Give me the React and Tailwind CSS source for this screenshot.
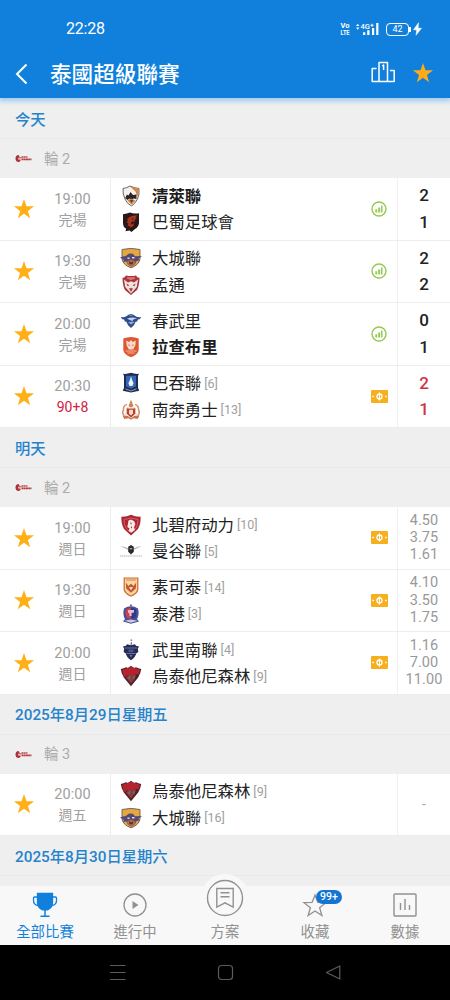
// src/pages/LeagueFixtures.jsx
import { useState } from 'react';

const sections = [
  {
    title: '今天',
    round: '輪 2',
    matches: [
      { time: '19:00', status: '完場', home: '清萊聯', away: '巴蜀足球會', winner: 'home', icon: 'stats', score: ['2', '1'] },
      { time: '19:30', status: '完場', home: '大城聯', away: '孟通', icon: 'stats', score: ['2', '2'] },
      { time: '20:00', status: '完場', home: '春武里', away: '拉查布里', winner: 'away', icon: 'stats', score: ['0', '1'] },
      { time: '20:30', status: '90+8', live: true, home: '巴吞聯', homeRank: 6, away: '南奔勇士', awayRank: 13, icon: 'odds', score: ['2', '1'] },
    ],
  },
  {
    title: '明天',
    round: '輪 2',
    matches: [
      { time: '19:00', status: '週日', home: '北碧府动力', homeRank: 10, away: '曼谷聯', awayRank: 5, icon: 'odds', odds: ['4.50', '3.75', '1.61'] },
      { time: '19:30', status: '週日', home: '素可泰', homeRank: 14, away: '泰港', awayRank: 3, icon: 'odds', odds: ['4.10', '3.50', '1.75'] },
      { time: '20:00', status: '週日', home: '武里南聯', homeRank: 4, away: '烏泰他尼森林', awayRank: 9, icon: 'odds', odds: ['1.16', '7.00', '11.00'] },
    ],
  },
  {
    title: '2025年8月29日星期五',
    round: '輪 3',
    matches: [
      { time: '20:00', status: '週五', home: '烏泰他尼森林', homeRank: 9, away: '大城聯', awayRank: 16 },
    ],
  },
  { title: '2025年8月30日星期六', matches: [] },
];

const STAR = 'M12 1l2.700 8 8.300.1-6.700 5 2.400 8L12 17.300 5.300 22.100l2.400-8-6.700-5L9.300 9z';
const SHIELD = 'M2.5 3Q6 3 11 1.5 16 3 19.5 3V11Q19 17 11 20.5 3 17 2.5 11Z';

// escudos dos times
const crests = {
  清萊聯: (
    <>
      <path d="M3 3.5Q7 3 10 1 14 3 19 3.5 19.5 10 17.5 14 15 19 11.5 21 7 19 5 14 2.5 9 3 3.5z" fill="#f4f1ec" stroke="#4a4038" strokeWidth=".8" />
      <path d="M10 1.4q4 2 8.6 2.300.2 5-1.200 8L15.500 6.500z" fill="#d9833c" />
      <path d="M5.200 13l1.800-3.500 1.500 1L10.500 7l2.500 3 3.500-.5v4.500l-3-.5-2 1.500-2-1.500-2 1.500z" fill="#2a2627" />
      <path d="M7.500 15.5L11 13.600l4.500 1.900-3.800 4.300z" fill="#c98147" />
      <path d="M10 15.200h3l-1.400 2.400z" fill="#3b2c28" />
    </>
  ),
  巴蜀足球會: (
    <>
      <path d="M3 3.2Q7 3 10 1.6 14 3 19 2.200V12q-.5 4-4 6l-3.500 3-2-1.500-4 .8.6-2.500Q3 16 3 12z" fill="#2b1717" />
      <path d="M9 6.200q4-2.400 8.400-1.600l-2.200 2.200 1.600.2-2.400 2 .9 1.500-3.400.3q-1.500 1.200-.3 2.600l2.600-1.500-.8 3-3 1.800-1-2-2 .8 1-3-1.800-1.200 1.800-2.200-1.600-.5z" fill="#a9351f" />
      <path d="M11.500 7.500l2.500-.4-1.600 1.700z" fill="#2b1717" />
    </>
  ),
  大城聯: (
    <>
      <path d="M2 2.500Q11 .3 20 2.500V12q-1 6-9 8.800Q3 18 2 12z" fill="#e3a93b" stroke="#70536a" strokeWidth=".9" />
      <path d="M0 10.500l4.500-1.500.5.500L9 6.600l4 .2 2 2.500 7-.3-3.500 2.500 1 2-3 .5q-1 4-5 5.500-4-1.500-5-5l-3.500.5 1-2z" fill="#54497a" />
      <path d="M7 14.500l4-2 4.500 2-1 3.200-3.500 2-3.200-2z" fill="#b96b3b" />
      <path d="M7.500 10.500h2v1.500h-2zM12 10h2.500v1.500H12z" fill="#e9dccd" />
      <path d="M9 14.200l2 1.400 2.200-1.400-.7 3h-3z" fill="#4b3342" />
    </>
  ),
  孟通: (
    <>
      <path d="M2.500 4Q5 3.500 6 1.500q5 1 10 0 1 2 3.500 2.500-.2 8-2.500 12l-6 5-6-5Q2.700 12 2.500 4z" fill="#a9343b" />
      <path d="M4 5.500L8 8.500l3-1.200 3 1.200 4-3-1.200 7.500L11 19.500 5.200 13z" fill="#ece3e1" />
      <path d="M7 3.200h8v1.600L11 6 7 4.800z" fill="#d9797b" />
      <path d="M6.300 9.500l3 1.800-1.600 1zM15.700 9.500l-3 1.800 1.600 1zM9 14.200h4L11 18z" fill="#a9343b" />
    </>
  ),
  春武里: (
    <>
      <path d="M.8 7Q4 7.500 6 6.500 8.500 4 11 4t5 2.500q2 1 5.200.5l-1.500 2.300-1.900.3-.6 1.800-1.600.4Q14.500 16 11 18 7.500 16 6.400 11.800l-1.600-.4-.6-1.800-1.900-.3z" fill="#2f4b8c" />
      <path d="M7 8.800Q11 6.600 17 8.200q-3.700.5-4.800 2.800z" fill="#c3d2ea" />
      <path d="M8 12.200l4.800-.8 1.800.8-3.600 2.300z" fill="#8ea9d3" />
      <path d="M8.500 6Q11 4.600 13.500 6z" fill="#8ea9d3" />
    </>
  ),
  拉查布里: (
    <>
      <path d="M3.300 2.600Q11-.4 18.700 2.600V14q-.4 4.600-7.700 7.300Q3.700 18.600 3.300 14z" fill="#dd5831" />
      <path d="M6.200 4.600l3 1.400L11 4l1.800 2 3-1.400-.4 4.600-2.200 4.200H8.800L6.600 9.200z" fill="#f8d9cc" />
      <path d="M8.300 8.200l2 1-1.400.8zM13.700 8.200l-2 1 1.400.8z" fill="#dd5831" />
      <path d="M5.500 15h11M7.500 17h7" stroke="#f3b39c" strokeWidth="1" />
    </>
  ),
  巴吞聯: (
    <>
      <path d="M3 1.800Q7 2.300 11 .8q4 1.500 8 1l-1 2v12l1.200 3L11 20.600 2.800 18.800l1.200-3v-12z" fill="#1f2c50" />
      <path d="M6 3.800h10v10.800l-5 2.200-5-2.200z" fill="#3568b3" />
      <path d="M11 4.200l1 3.600 1.600 3.400L12.400 14H9.600l-1.200-2.800L10 7.800z" fill="#f1f5fb" />
      <path d="M5.500 16.800L11 19l5.500-2.200" stroke="#aebfdb" fill="none" strokeWidth=".8" />
    </>
  ),
  南奔勇士: (
    <>
      <path d="M11 .8l1.600 3.400H9.400z" fill="#c98d5e" />
      <path d="M7 5.400Q3 6.500 3.500 11q-2 3 .8 5.500M15 5.400q4 1.100 3.500 5.600 2 3-.8 5.500" fill="none" stroke="#cf9270" strokeWidth="1.500" />
      <path d="M8.400 7.400L6 9.500v4L5 15.500l3-.5zM13.600 7.400L16 9.500v4l1 2-3-.5z" fill="#e9bda0" />
      <path d="M7 9.500h8v5.400l-4 3.800-4-3.800z" fill="#b8412f" />
      <path d="M9 10.800h4v3.600l-2 2-2-2z" fill="#f2d9c8" />
      <path d="M2.500 16.500l5 .2 3.500 2.600 3.500-2.600 5-.2-1.800 3.500-4.200-.8L11 20.700 8.500 19.200l-4.200.8z" fill="#c9764f" />
      <circle cx="11" cy="6.200" r="2.200" fill="#cf8257" />
    </>
  ),
  北碧府动力: (
    <>
      <path d="M1.400 2.600Q6 3 11 .7q5 2.300 9.600 1.900Q21 10 18 15l-7 6.500L4 15Q1 10 1.400 2.600z" fill="#ad2530" />
      <path d="M4 5.500Q11 2.500 18 5.500q0 5.500-2 8.500l-5 5-5-5Q4 11 4 5.500z" fill="none" stroke="#d9787d" strokeWidth=".7" />
      <path d="M8.500 6.500l2.500-1 3 1.500 1.400 3-1.400 3.500 1 2.500-3.500 2.500-3-1.500 1-2.500-2.200-1.500.6-3z" fill="#f5e9e6" />
      <path d="M10 8.500l2 .8-1 1.200zM10.500 13l1.500-.6v2z" fill="#ad2530" />
    </>
  ),
  曼谷聯: (
    <>
      <path d="M0 6.300Q5 6.300 8 8.300V10Q5 8 0 6.300zM22 6.300Q17 6.300 14 8.300V10q3-2 8-3.700z" fill="#b7b7b7" />
      <path d="M8.200 6.700L11 5l2.800 1.700v5.100L11 14.400l-2.800-2.600z" fill="#292929" />
      <path d="M9.800 8.100h2.400v1.200H9.800z" fill="#c5b78e" />
      <path d="M0 16h22" stroke="#cfcfcf" strokeWidth="1.300" strokeDasharray="1.400 .5" />
    </>
  ),
  素可泰: (
    <>
      <path d="M3.600 1.400h14.800v12q-.6 4.400-7.400 7.400-6.800-3-7.400-7.400z" fill="#d4652b" />
      <path d="M4.800 2.600h12.400v10.600q-.6 3.700-6.200 6.200-5.600-2.500-6.200-6.200z" fill="#f6d8a0" />
      <path d="M5.800 6.500l2.600 3.600L11 7.800l2.600 2.300 2.600-3.600-.4 6L11 16.800l-4.800-4.300z" fill="#c4553b" />
      <path d="M9 11h4l-2 3.400z" fill="#f7dba0" />
      <path d="M6 4h10" stroke="#d98142" />
    </>
  ),
  泰港: (
    <>
      <path d="M11 .8l1.500 2.400h-3z" fill="#8f5a7b" />
      <path d="M4 5.500Q11 .8 18 5.500q1.600 6.500-1 10.500l2 2.500-8 2.300-8-2.300L5 16Q2.400 12 4 5.500z" fill="#4a4f96" />
      <path d="M11 4.800q3 .2 5.200 1.800.8 5-1 8.400L11 16z" fill="#2b3d91" />
      <path d="M11 4.800Q8 5 5.800 6.600q-.8 5 1 8.400L11 16z" fill="#c7434f" />
      <path d="M8 7h6v2.600l-2.400.4V13H9.400v-2.600L8 9.600z" fill="#e9bcc6" />
      <path d="M4.500 17.800l6.500-1.300 6.500 1.300-6.500 1.900z" fill="#c7c9e0" />
    </>
  ),
  武里南聯: (
    <>
      <circle cx="11.300" cy="1.200" r=".9" fill="#9a8a68" />
      <path d="M11.300 2.500l1 3h-2z" fill="#54597a" />
      <path d="M3 7.500l3-.8 1-1.500 4 1 4-1 1 1.500 3 .8-1.200 2.300.6 3.200-2 1.200Q15.500 18 11 21.300 6.500 18 5.600 14.200l-2-1.200.6-3.200z" fill="#252c56" />
      <path d="M5 9h12M6.500 14.500h9" stroke="#7f86a8" strokeWidth=".8" />
      <path d="M8.500 10.500h5v2.600h-5z" fill="#4a5690" />
      <path d="M9.500 16h3L11 18.500z" fill="#6d77a6" />
    </>
  ),
  烏泰他尼森林: (
    <>
      <path d="M.8 4Q4 3.500 6 2.300l2 .6L11 .8l3 2.100 2-.6Q18 3.500 21.200 4q-.5 4.500-3 8.500L11 21.300 3.800 12.500Q1.300 8.500.8 4z" fill="#51202a" />
      <path d="M2 4.800L11 1.800l9 3-1.400 4.700-2.600-.7-4 1.700-4-.5-4 2.500z" fill="#b3242f" />
      <path d="M6 12.500l3-3 4 .7 3-1.500-1.300 5.100L11 18.500z" fill="#8d3a3b" />
      <path d="M7.500 13l3-2.500-.6 4.200zM12.500 12.300l3-2-1.500 4z" fill="#74686a" />
    </>
  ),
};

function Crest({ team }) {
  return (
    <svg viewBox="0 0 22 22" className="w-[22px] h-[22px] shrink-0" fill="none">
      {crests[team] || <path d={SHIELD} fill="#999" />}
    </svg>
  );
}

function Star({ className }) {
  return (
    <svg viewBox="0 0 24 24" className={className} fill="currentColor">
      <path d={STAR} />
    </svg>
  );
}

function LeagueLogo() {
  return (
    <svg viewBox="0 0 17 9" className="w-[17px] h-[9px]" fill="none">
      <path d="M3.6 1Q.5 1 .5 4.500T4 8l1.500-1V5.500H3.300V3.800L5 3.400z" fill="#ad323a" />
      <path d="M4 3.800h2.600" stroke="#c75b60" strokeWidth="1.200" />
      <path d="M6.500 3h6.200" stroke="#bb4a50" strokeWidth="1.500" strokeDasharray="1.600 .3" />
      <path d="M6.500 5.400h10" stroke="#b5383f" strokeWidth="1.900" strokeDasharray="2 .25" />
    </svg>
  );
}

function StatsIcon() {
  return (
    <svg viewBox="0 0 16 16" className="w-4 h-4" fill="none">
      <circle cx="8" cy="8" r="7" stroke="#96c952" strokeWidth="1.400" />
      <path d="M4.300 8.200h1.900v3.300H4.300zM7.200 6.400h2v5.100h-2z" fill="#96c952" />
      <path d="M10.800 4.500v7" stroke="#96c952" strokeWidth="1.500" />
    </svg>
  );
}

function OddsIcon() {
  return (
    <svg viewBox="0 0 17 13" className="w-[17px] h-[13px]" fill="none">
      <rect width="17" height="13" rx="1" fill="#f6b01e" />
      <circle cx="8.500" cy="6.500" r="2.500" stroke="#fff" strokeWidth="1.300" />
      <path d="M8.500 2.400v8.200" stroke="#fff" strokeWidth="1.100" />
      <path d="M1.300 6.500h1.600M14.100 6.500h1.600" stroke="#fff" strokeWidth="1.500" />
    </svg>
  );
}

function Team({ name, rank, bold }) {
  return (
    <div className="flex items-center h-[26.5px]">
      <Crest team={name} />
      <span className={`ml-[10px] pt-[3px] text-[16.4px] whitespace-nowrap ${bold ? 'font-bold text-[#1c1c1c]' : 'text-[#222]'}`}>
        {name}
      </span>
      {rank && <span className="ml-[3px] pt-[2px] text-[12.5px] text-[#a0a0a0]">[{rank}]</span>}
    </div>
  );
}

function MatchRow({ match }) {
  const [fav, setFav] = useState(true);

  return (
    <div className="flex h-[62.5px] bg-white border-b border-[#ededed]">
      <button type="button" onClick={() => setFav(!fav)} className="w-12 flex items-center justify-center">
        <Star className={fav ? 'w-[22px] h-[22px] text-[#ffb017]' : 'w-[22px] h-[22px] text-[#ddd]'} />
      </button>
      <div className="w-[49px] flex flex-col items-center justify-center pt-[2px] text-[#a0a0a0]">
        <span className="text-[14.5px] leading-[21px] tracking-[.1px]">{match.time}</span>
        <span className={`text-sm leading-[21px] ${match.live ? 'text-[#d0213f]' : ''}`}>{match.status}</span>
      </div>
      <div className="ml-[13px] w-[248px] flex flex-col justify-center border-l border-[#ededed] pl-[9px]">
        <Team name={match.home} rank={match.homeRank} bold={match.winner === 'home'} />
        <Team name={match.away} rank={match.awayRank} bold={match.winner === 'away'} />
      </div>
      <div className="w-[39px] flex items-center justify-center pr-[2px] pl-[5px]">
        {match.icon === 'stats' && <StatsIcon />}
        {match.icon === 'odds' && <OddsIcon />}
      </div>
      <div className="flex-1 flex flex-col items-center justify-center border-l border-[#f0f0f0]">
        {match.score?.map((s, i) => (
          <span key={i} className={`text-[17px] leading-[26.5px] font-medium ${match.live ? 'text-[#d32f42]' : 'text-[#222]'}`}>
            {s}
          </span>
        ))}
        {match.odds?.map((o) => (
          <span key={o} className="relative text-[14.5px] leading-[17.2px] tracking-[.1px] text-[#999]">{o}</span>
        ))}
        {!match.score && !match.odds && <span className="text-sm text-[#aaa]">-</span>}
      </div>
    </div>
  );
}

function StatusBar() {
  return (
    <div className="flex items-center justify-between h-[58px] pl-[66px] pr-[28px]">
      <span className="text-[16px] tracking-[-.2px]">22:28</span>
      <div className="flex items-center">
        <svg viewBox="0 0 10 14" className="w-[10px] h-[14px]" fill="currentColor" fontFamily="Roboto, sans-serif" fontWeight="700">
          <text x=".5" y="6.300" fontSize="7.500" textLength="9" lengthAdjust="spacingAndGlyphs">Vo</text>
          <text x=".5" y="13.300" fontSize="8" textLength="9" lengthAdjust="spacingAndGlyphs">LTE</text>
        </svg>
        <svg viewBox="0 0 24 14" className="ml-[5px] w-6 h-[14px]" fill="currentColor">
          <path d="M1 4l1.700-2.300L4.400 4zM1 5.500h3.400L2.700 7.800z" />
          <text x="5.600" y="6.800" fontSize="7.500" fontWeight="500" fontFamily="Roboto, sans-serif">4G</text>
          <path d="M15.500 2.800h3v1h-3zM16.500 1.800h1v3h-1z" />
          <path d="M8 10.200h2.300V13H8zM12.200 8.200h2.300V13h-2.300zM17 6h2.200v7H17zM21.200 1h2.200v12h-2.200z" />
        </svg>
        <div className="ml-[7px] w-[23px] h-[13px] border-[1.5px] border-white rounded-[4px] flex items-center justify-center text-[9px] leading-none">42</div>
        <div className="w-[2px] h-[5px] bg-white" />
        <svg viewBox="0 0 9 14" className="ml-[2px] w-[9px] h-[14px]" fill="currentColor">
          <path d="M5.500.7L.5 7.800h3.200L3 13.300l5.500-7.100H5.200z" stroke="currentColor" strokeWidth=".5" />
        </svg>
      </div>
    </div>
  );
}

function NavItem({ label, active, children }) {
  return (
    <button
      type="button"
      className={`relative w-[90px] h-[59px] flex flex-col items-center pt-[6px] ${active ? 'text-[#1080dc]' : 'text-[#919191]'}`}
    >
      {children}
      <span className="mt-[3px] text-[14.4px] leading-6">{label}</span>
    </button>
  );
}

export default function App() {
  return (
    <div className="w-[450px] h-[1000px] flex flex-col overflow-hidden bg-[#efefef] font-[Roboto,'Noto_Sans_CJK_TC',sans-serif]">
      <header className="relative z-10 h-[98px] mb-px shrink-0 bg-[#1080dc] text-white shadow-[0_2px_5px_1px_rgba(120,185,240,0.7)]">
        <StatusBar />
        <div className="flex items-center h-[31px] pl-[14px] pr-[16px]">
          <svg viewBox="0 0 14 22" className="w-[14px] h-[22px]" fill="none" stroke="currentColor" strokeWidth="2">
            <path d="M12.500 1.500L3 11l9.500 9.500" />
          </svg>
          <h1 className="ml-[22px] pt-px text-[21.6px] font-medium leading-[31px]">泰國超級聯賽</h1>
          <svg viewBox="0 0 24 22" className="ml-auto mb-[3px] w-6 h-[22px]" fill="none" stroke="currentColor" strokeWidth="1.500">
            <path d="M8 20.500v-19h8.500v19M5.500 7.500H1.200v13h22v-11h-4.300M11.200 5l1.400-1v5" strokeLinejoin="round" />
          </svg>
          <Star className="ml-[17px] mb-[2px] w-[22px] h-[22px] text-[#ffab15]" />
        </div>
      </header>

      <main className="flex-1 min-h-0 overflow-hidden">
        {sections.map((section) => (
          <section key={section.title}>
            <div className="h-10 flex items-center pl-[15px] pt-[3px] border-b border-[#e9e9e9] text-[15.3px] font-medium text-[#2583cc]">
              {section.title}
            </div>
            {section.round && (
              <div className="h-[39px] flex items-center pl-[15px] text-[#ababab]">
                <LeagueLogo />
                <span className="ml-[12px] pt-[2px] text-[14.5px]">{section.round}</span>
              </div>
            )}
            {section.matches.map((match) => (
              <MatchRow key={match.time + match.home} match={match} />
            ))}
          </section>
        ))}
      </main>

      <nav className="relative h-[59px] shrink-0 flex bg-[#f8f8f8]">
        <NavItem label="全部比賽" active>
          <svg viewBox="0 0 26 26" className="w-[26px] h-[26px]" fill="none" stroke="currentColor" strokeWidth="1.300">
            <path d="M5.500 1.500h15V11q0 4.500-5 6.800h-5Q5.500 15.500 5.500 11z" fill="currentColor" />
            <path d="M5.500 5h-3q-1 0-1 1v2.500q0 4 4.500 5.200M20.500 5h3q1 0 1 1v2.500q0 4-4.500 5.200" />
            <path d="M13 17v7M8.500 24.300h9" strokeWidth="1.500" />
          </svg>
        </NavItem>
        <NavItem label="進行中">
          <svg viewBox="0 0 26 26" className="w-[26px] h-[26px]" fill="none" stroke="currentColor" strokeWidth="1.300">
            <circle cx="13" cy="13" r="11" />
            <path d="M10.500 9l6 4-6 4z" fill="currentColor" stroke="none" />
          </svg>
        </NavItem>
        <NavItem label="方案">
          <div className="absolute left-[21px] -top-[12px] w-12 h-12 rounded-full bg-[#f8f8f8] flex items-center justify-center">
            <svg viewBox="0 0 38 38" className="w-[38px] h-[38px]" fill="none" stroke="currentColor" strokeWidth="1.400">
              <circle cx="19" cy="19" r="17.500" />
              <path d="M10.800 9.500h16.400v18.700L19 23.800l-8.200 4.400zM14.500 13.800h9M14.500 17.800h9" />
            </svg>
          </div>
          <div className="w-[26px] h-[26px]" />
        </NavItem>
        <NavItem label="收藏">
          <svg viewBox="0 0 26 26" className="w-[26px] h-[26px]" fill="none" stroke="currentColor" strokeWidth="1.300">
            <path d="M13 3l2.900 7.400 8.100.3-6.400 5 2.300 7.800L13 19l-6.900 4.500 2.300-7.800-6.400-5 8.100-.3z" />
          </svg>
          <span className="absolute left-[46px] top-[4px] w-[26px] h-[14px] rounded-full bg-[#1476d2] text-white text-[10.5px] leading-[14px] font-medium text-center">
            99+
          </span>
        </NavItem>
        <NavItem label="數據">
          <svg viewBox="0 0 26 26" className="w-[26px] h-[26px]" fill="none" stroke="currentColor" strokeWidth="1.400">
            <rect x="2" y="2" width="22" height="22" rx="1" />
            <path d="M8.500 11v7M13 7v11M17.500 13v5" />
          </svg>
        </NavItem>
      </nav>

      <div className="h-[55px] shrink-0 bg-black flex items-center justify-center gap-[91px] text-[#5c5c5c]">
        <svg viewBox="0 0 17 17" className="w-[17px] h-[17px]" fill="none" stroke="currentColor" strokeWidth="1.200">
          <path d="M1 1.500h15.500M1 8.500h15.500M1 15.500h15.500" />
        </svg>
        <svg viewBox="0 0 17 17" className="w-[17px] h-[17px]" fill="none" stroke="currentColor" strokeWidth="1.200">
          <rect x="1.500" y="1.500" width="14" height="14" rx="3" />
        </svg>
        <svg viewBox="0 0 17 17" className="w-[17px] h-[17px]" fill="none" stroke="currentColor" strokeWidth="1.200" strokeLinejoin="round">
          <path d="M14.800 2v13L1.500 8.500z" />
        </svg>
      </div>
    </div>
  );
}
